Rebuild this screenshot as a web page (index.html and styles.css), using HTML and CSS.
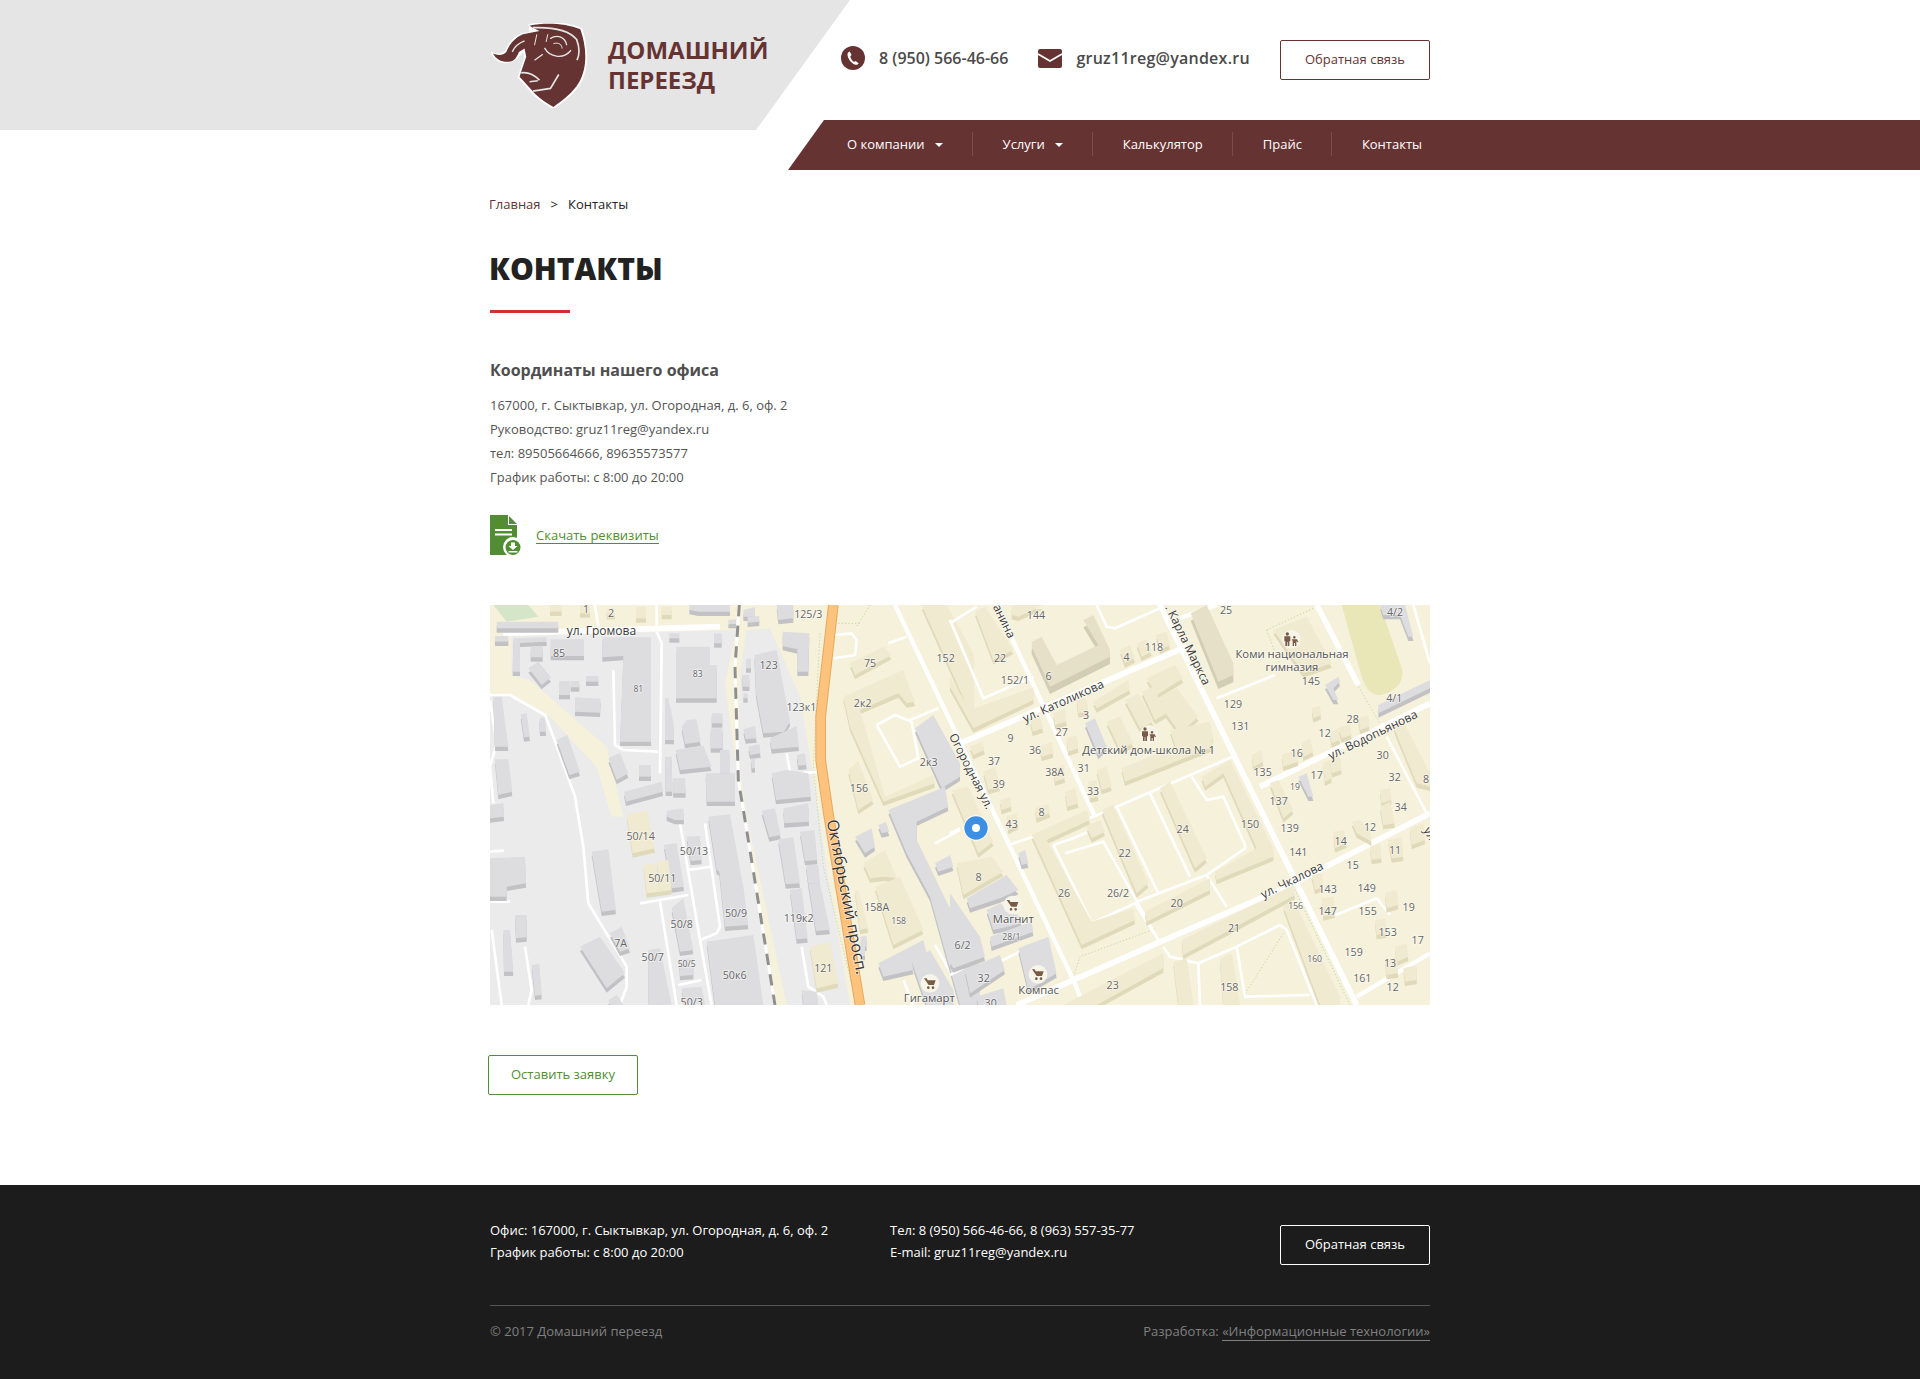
FILE: index.html
```html
<!DOCTYPE html>
<html lang="en">
<head>
    <meta charset="UTF-8">
    <link rel="stylesheet" href="styles.css">
    <title>Контакты</title>
</head>
<body>
<header class="header">
    <div class="headerGray"></div>
    <div class="wrap headerTop">
        <a class="logo" href="#">
            <svg class="logoIcon" viewBox="35 38 290 256" width="97" height="85">
                <path fill="#fff" d="M146 42C200 30 262 34 308 53C328 110 330 172 305 218C285 253 252 275 222 298C192 280 165 262 150 242L114 202L124 172L134 143L131 125L118 140C105 160 70 165 52 152C42 145 36 136 32 124C48 132 62 133 76 122C86 96 105 76 128 68L150 66Z"/>
                <path fill="#663333" d="M150 46C200 36 260 40 303 57C322 110 325 170 300 215C280 250 250 270 222 291C195 275 170 258 155 238L120 200L128 175L140 140L135 115L118 125C112 140 105 152 92 154C72 158 50 150 40 130C58 138 72 134 80 125C88 105 105 82 130 72L180 62L160 52Z"/>
                <g fill="none" stroke="#e5e5e5">
                    <path stroke-width="5" d="M160 52C220 50 270 60 292 88C302 115 300 135 293 150"/>
                    <path stroke-width="4" d="M195 113C210 140 250 150 275 120M212 85C235 70 258 82 262 105"/>
                    <path stroke-width="3" d="M222 100C240 95 248 105 248 115M172 72L165 105M205 72L200 95"/>
                    <path stroke-width="4" d="M98 125C105 110 118 98 135 92M165 150L190 132"/>
                    <path stroke-width="5" d="M125 188C145 185 165 195 180 210M150 215L175 212M160 243L213 235L238 193"/>
                </g>
            </svg>
            <span class="logoText">Домашний<br>переезд</span>
        </a>
        <div class="contactItem">
            <svg class="contactIcon" viewBox="0 0 24 24" width="24" height="24">
                <ellipse cx="12" cy="12" rx="12" ry="12" fill="#663333"/>
                <path fill="#fff" d="M8.800 5.500L10.600 8.900L9.300 10.400C9.700 12.300 11 14.400 12.900 15.900L14.600 14.900L17.600 17.200C17.100 18.400 15.800 19.100 14.500 18.800C10.400 17.700 7 13 6.500 9C6.300 7.200 7.300 5.900 8.800 5.500Z"/>
            </svg>
            <span>8 (950) 566-46-66</span>
        </div>
        <div class="contactItem contactMail">
            <svg class="contactIcon" viewBox="0 0 24 19" width="24" height="19">
                <rect width="24" height="19" rx="2" fill="#663333"/>
                <path fill="none" stroke="#fff" stroke-width="1.6" d="M0 5L12 12L24 5"/>
            </svg>
            <span>gruz11reg@yandex.ru</span>
        </div>
        <a class="btn btnBrown" href="#">Обратная связь</a>
    </div>
    <nav class="nav">
        <a class="navItem navArrow" href="#">О компании</a>
        <a class="navItem navArrow" href="#">Услуги</a>
        <a class="navItem" href="#">Калькулятор</a>
        <a class="navItem" href="#">Прайс</a>
        <a class="navItem navLast" href="#">Контакты</a>
    </nav>
</header>

<main class="wrap">
    <div class="breadcrumbs"><a href="#">Главная</a><span class="crumbSep">&gt;</span>Контакты</div>
    <h1 class="pageTitle">Контакты</h1>
    <div class="titleLine"></div>
    <h3 class="officeTitle">Координаты нашего офиса</h3>
    <div class="officeText">
        <p>167000, г. Сыктывкар, ул. Огородная, д. 6, оф. 2</p>
        <p>Руководство: gruz11reg@yandex.ru</p>
        <p>тел: 89505664666, 89635573577</p>
        <p>График работы: с 8:00 до 20:00</p>
    </div>
    <div class="docRow">
        <svg viewBox="0 0 32 40" width="32" height="40">
            <path fill="#528c34" d="M0 0H18V10H27V40H0Z"/>
            <path fill="#528c34" d="M19 1L27 9H19Z"/>
            <path fill="none" stroke="#fff" stroke-width="2" d="M5 15H22M5 19.500H22"/>
            <circle cx="23" cy="32" r="10" fill="#fff"/>
            <circle cx="23" cy="32.500" r="7.500" fill="#528c34"/>
            <path fill="#fff" d="M21 27.500H25V31H27.500L23 35L18.500 31H21ZM18.500 36H27.500V37.500H18.500Z"/>
        </svg>
        <a class="docLink" href="#">Скачать реквизиты</a>
    </div>

    <svg class="map" viewBox="0 0 940 400" width="940" height="400">
        <defs>
            <g id="westGray">
                <polygon points="50,65 235,65 235,85 50,85"/><polygon points="100,115 200,112 200,125 120,128 120,215 98,215"/><polygon points="45,108 85,108 85,125 45,125"/>
                <polygon points="212,118 312,118 312,168 212,168"/><polygon points="152,140 188,140 188,172 152,172"/><polygon points="145,205 175,185 213,232 185,255"/>
                <polygon points="237,243 270,243 270,285 237,285"/><polygon points="272,243 298,243 298,262 272,262"/><polygon points="318,228 355,228 355,245 318,245"/>
                <polygon points="285,292 362,296 360,338 285,335"/><polygon points="367,112 513,112 513,425 420,425 430,168 367,172"/><polygon points="590,140 690,140 690,195 710,195 710,295 588,295"/>
                <polygon points="568,100 598,100 598,115 568,115"/><polygon points="702,100 725,100 725,130 702,130"/><polygon points="555,295 565,295 580,365 582,420 555,420"/>
                <polygon points="605,380 620,360 650,358 662,425 615,432"/><polygon points="695,340 727,340 727,370 695,370"/><polygon points="692,385 728,385 728,445 692,445"/>
                <polygon points="587,450 670,437 695,500 600,510"/><polygon points="720,450 748,450 748,520 720,520"/><polygon points="677,520 765,520 765,605 680,605"/>
                <polygon points="555,470 575,470 577,575 557,575"/><polygon points="578,535 615,535 617,580 580,580"/><polygon points="477,495 513,495 513,530 477,530"/>
                <polygon points="385,475 420,458 445,520 410,540"/><polygon points="432,575 545,545 549,575 438,605"/><polygon points="560,632 610,625 612,660 585,660 560,650"/>
                <polygon points="230,420 262,405 300,515 268,525"/><polygon points="122,343 140,340 150,410 132,412"/><polygon points="178,355 195,352 198,395 180,395"/>
                <polygon points="40,290 65,290 85,440 45,440"/><polygon points="45,478 85,478 97,575 55,585"/><polygon points="30,615 70,610 72,650 30,655"/>
                <polygon points="30,775 135,770 138,850 80,860 80,890 30,890"/><polygon points="335,755 385,748 408,930 365,935"/><polygon points="620,710 660,708 665,780 632,783"/>
                <polygon points="552,735 590,730 612,860 575,865"/><polygon points="685,650 750,643 790,860 805,975 735,980 718,815 710,810"/><polygon points="575,925 610,895 640,1050 600,1055"/>
                <polygon points="680,1025 820,1005 850,1215 705,1215"/><polygon points="505,1050 540,1045 575,1215 505,1215"/><polygon points="597,1078 640,1075 640,1125 600,1128"/>
                <polygon points="605,1165 665,1160 675,1215 610,1215"/><polygon points="300,1040 360,1010 435,1120 380,1165"/><polygon points="390,1000 425,980 450,1045 420,1055"/>
                <polygon points="105,945 140,945 140,1012 108,1015"/><polygon points="70,990 90,990 100,1115 72,1115"/><polygon points="155,1095 178,1092 185,1185 165,1187"/>
                <polygon points="385,1200 410,1185 430,1215 390,1215"/><polygon points="790,30 825,22 825,50 790,50"/><polygon points="803,50 838,48 838,65 803,68"/>
                <polygon points="745,60 768,58 768,72 745,72"/><polygon points="628,15 750,15 750,35 655,35 628,30"/><polygon points="890,15 940,15 940,55 895,60"/>
                <polygon points="908,95 988,100 985,215 952,215 952,148 908,138"/><polygon points="823,165 890,150 930,365 912,395 850,400 828,280"/><polygon points="798,178 813,175 813,205 798,205"/>
                <polygon points="785,225 808,225 808,260 788,260"/><polygon points="790,280 803,280 803,295 790,295"/><polygon points="790,388 825,378 830,415 797,418"/>
                <polygon points="870,415 950,378 957,440 875,448"/><polygon points="805,440 838,432 842,460 810,465"/><polygon points="812,475 825,475 825,505 815,505"/>
                <polygon points="950,465 975,460 980,495 955,497"/><polygon points="875,520 920,510 985,520 993,590 888,600"/><polygon points="910,625 985,610 987,665 913,670"/>
                <polygon points="845,632 885,625 902,705 868,712"/><polygon points="895,718 940,712 960,850 917,853"/><polygon points="960,695 1003,690 1012,780 975,783"/>
                <polygon points="978,795 1015,795 1020,850 985,850"/><polygon points="985,850 1020,850 1050,990 1008,993"/><polygon points="930,870 965,865 983,1015 950,1018"/>
                <polygon points="965,1170 1010,1175 1015,1215 970,1215"/><polygon points="1305,385 1360,345 1440,490 1440,530 1385,565"/>
                <polygon points="1225,630 1395,560 1405,620 1310,665 1310,720 1400,905 1500,1100 1500,1215 1440,1215 1350,890 1280,760"/>
                <polygon points="1125,710 1175,685 1185,740 1155,760"/><polygon points="1195,675 1218,665 1228,695 1205,700"/><polygon points="1365,790 1410,765 1420,800 1375,815"/>
                <polygon points="1195,1090 1330,1020 1340,1060 1295,1085 1300,1110 1210,1130"/><polygon points="1295,1085 1350,1050 1420,1170 1420,1215 1340,1215"/>
                <polygon points="1142,1010 1160,1008 1160,1040 1142,1040"/><polygon points="1142,1040 1155,1038 1155,1068 1142,1068"/>
            </g>
            <g id="westBeige">
                <polygon points="440,645 500,630 525,745 458,760"/><polygon points="490,795 525,790 540,875 500,880"/><polygon points="530,785 565,780 575,870 540,875"/>
                <polygon points="990,1040 1050,1025 1075,1150 1010,1165"/><polygon points="1110,190 1210,140 1235,165 1125,225"/>
                <polygon points="1090,290 1270,210 1305,305 1280,310 1255,280 1140,330 1215,590 1360,525 1365,550 1210,605 1110,380"/>
                <polygon points="1105,510 1135,485 1180,600 1135,630"/><polygon points="1125,870 1135,870 1165,985 1140,990"/><polygon points="1185,860 1260,830 1330,990 1240,1035"/>
                <polygon points="1150,790 1215,750 1250,835 1215,830 1170,835"/><polygon points="1325,15 1400,15 1480,160 1480,360 1345,60"/>
                <polygon points="210,15 245,15 245,35 210,35"/><polygon points="300,15 330,15 330,40 300,40"/><polygon points="468,20 498,20 498,55 468,55"/>
                <polygon points="545,20 575,20 575,45 545,45"/><polygon points="380,25 405,25 405,45 380,45"/>
            </g>
            <g id="eastBeige">
                <polygon points="75,35 105,20 190,150 130,180"/><polygon points="185,15 280,15 205,50 185,45"/>
                <polygon points="510,150 540,135 555,175 525,190"/><polygon points="560,130 590,118 605,155 575,170"/><polygon points="618,105 650,95 660,135 630,150"/>
                <polygon points="0,230 60,330 250,262 250,300 70,385 0,260"/><polygon points="430,305 535,240 540,270 440,325"/>
                <polygon points="590,235 675,195 700,235 620,285"/><polygon points="525,300 565,280 610,365 570,385"/><polygon points="575,275 610,260 650,340 615,360"/>
                <polygon points="630,290 680,265 745,350 690,400 640,330"/><polygon points="470,365 510,350 550,430 510,450"/><polygon points="660,390 780,365 790,415 680,450"/>
                <polygon points="515,505 780,395 790,440 525,545"/><polygon points="60,440 95,425 105,450 70,465"/><polygon points="100,515 135,500 150,560 115,570"/>
                <polygon points="150,600 180,590 185,620 155,630"/><polygon points="170,650 200,640 205,675 175,690"/><polygon points="255,625 295,612 300,640 260,655"/>
                <polygon points="345,575 375,565 385,610 352,620"/><polygon points="240,360 270,350 280,385 248,395"/><polygon points="310,340 345,325 350,365 315,375"/>
                <polygon points="380,300 410,295 415,335 385,340"/><polygon points="350,415 380,405 385,445 355,455"/><polygon points="270,440 305,425 310,460 275,470"/>
                <polygon points="310,505 340,495 345,535 315,545"/><polygon points="440,510 470,500 485,560 455,570"/><polygon points="415,545 440,540 445,590 420,595"/>
                <polygon points="245,705 410,630 420,660 290,720 425,965 550,925 555,960 395,1035"/><polygon points="455,630 490,615 595,850 560,880"/>
                <polygon points="410,680 450,660 465,695 425,715"/><polygon points="630,565 660,545 770,775 735,805"/>
                <polygon points="755,530 840,480 970,745 970,770 800,840 795,815 920,745 820,520 765,560"/><polygon points="585,935 780,835 780,870 590,965"/>
                <polygon points="695,1020 1030,855 1035,885 700,1065"/><polygon points="340,1215 640,1060 640,1105 440,1215"/><polygon points="1000,920 1030,900 1170,1190 1170,1215 1110,1215"/>
                <polygon points="810,1075 845,1060 870,1215 820,1215"/><polygon points="670,1085 710,1075 730,1215 685,1215"/><polygon points="905,465 935,450 940,485 910,500"/>
                <polygon points="995,465 1040,450 1045,485 1000,500"/><polygon points="1055,430 1080,415 1090,455 1060,470"/><polygon points="1140,400 1165,385 1170,420 1145,430"/>
                <polygon points="1165,385 1200,370 1205,405 1175,415"/><polygon points="1225,355 1255,345 1258,380 1230,390"/><polygon points="1085,325 1110,318 1113,345 1090,355"/>
                <polygon points="960,550 985,540 1030,630 1000,655"/><polygon points="1120,490 1140,480 1145,535 1125,545"/><polygon points="1140,480 1170,470 1175,510 1145,520"/>
                <polygon points="1330,380 1360,365 1440,520 1440,560 1400,550"/><polygon points="1290,570 1320,565 1325,600 1295,610"/><polygon points="1290,620 1320,605 1335,670 1300,675"/>
                <polygon points="1150,695 1180,690 1190,730 1155,745"/><polygon points="1205,665 1230,660 1260,690 1265,725 1220,700"/><polygon points="1260,740 1290,730 1295,775 1265,780"/>
                <polygon points="1315,720 1355,710 1360,770 1325,775"/><polygon points="1380,685 1420,670 1425,720 1385,735"/><polygon points="1085,825 1115,820 1120,860 1095,870"/>
                <polygon points="1115,895 1150,890 1155,940 1120,950"/><polygon points="1305,880 1340,870 1345,915 1310,925"/><polygon points="1275,960 1305,955 1310,1000 1280,1005"/>
                <polygon points="1335,1040 1370,1030 1375,1070 1340,1085"/><polygon points="1305,1080 1340,1070 1345,1120 1310,1125"/><polygon points="1360,1105 1400,1095 1400,1140 1365,1145"/>
                <polygon points="5,570 55,560 130,725 85,760"/><polygon points="20,790 125,770 160,815 40,885"/><polygon points="970,90 1070,50 1145,190 1060,220"/>
            </g>
            <g id="eastTan">
                <polygon points="245,125 275,110 320,195 445,135 400,60 430,45 480,150 480,170 300,260 245,140"/><polygon points="722,40 770,15 850,190 850,225 805,245"/>
            </g>
            <g id="eastGray">
                <polygon points="405,370 435,355 470,440 445,465"/><polygon points="1045,530 1070,520 1090,590 1075,590"/><polygon points="205,760 225,750 235,790 215,795"/>
                <polygon points="1125,255 1165,230 1170,245 1150,265 1165,300 1150,300"/><polygon points="1285,315 1440,240 1440,265 1285,340"/><polygon points="1290,15 1365,15 1390,110 1375,110 1350,45 1300,45"/>
                <polygon points="50,895 170,825 205,870 150,895 60,925"/><polygon points="110,930 150,910 210,950 215,970 130,990"/><polygon points="120,1010 245,965 250,995 125,1040"/>
                <polygon points="205,1045 295,1010 320,1120 235,1170"/><polygon points="0,880 90,1010 105,1070 10,1105 0,1090"/><polygon points="45,1110 150,1065 165,1110 60,1180"/>
                <polygon points="80,1190 160,1165 170,1215 85,1215"/>
            </g>
            <g id="cartIcon">
                <circle r="28" fill="#f7f4ea"/>
                <path fill="#7a5c46" d="M-18 -15H-10L-7 -9H17L12 5H-4ZM-5 9A4 4 0 1 0 -5 17A4 4 0 1 0 -5 9ZM9 9A4 4 0 1 0 9 17A4 4 0 1 0 9 9Z"/>
            </g>
            <g id="peopleIcon">
                <circle r="28" fill="#f7f4ea"/>
                <path fill="#7a5c46" d="M-12 -21A5 5 0 1 1 -12 -11A5 5 0 1 1 -12 -21ZM-21 -9H-3V6H-6V20H-11V8H-13V20H-18V6H-21ZM9 -10A4 4 0 1 1 9 -2A4 4 0 1 1 9 -10ZM1 0H17L21 8L18 9L15 5V20H11V11H8V20H4V5Z"/>
            </g>
        </defs>

        <rect class="mapBg" width="940" height="400"/>

        <!-- west part, crop coordinates -->
        <g transform="translate(-10,-5) scale(0.33333)">
            <polygon class="mapGreen" points="40,15 145,15 175,50 80,65"/>
            <polygon class="mapZone" points="30,110 770,90 735,250 745,330 775,540 800,650 885,1215 30,1215"/>
            <polygon class="mapBg" points="30,110 95,110 95,225 150,240 380,440 430,650 395,650 350,500 210,350 100,285 30,285"/>
            <polygon class="mapZone" points="800,90 870,85 960,290 1000,530 1040,800 1110,1215 920,1215 800,650 772,450 782,200"/>
            <polyline class="mapPath" points="1020,100 1000,500 1030,800 1130,1215"/>
            <polyline class="mapPath" points="1075,70 1140,70"/>
            <polyline class="mapPath" points="1170,15 1130,80"/>

            <polyline class="road roadL" points="70,100 720,80"/>
            <polyline class="road roadS" points="345,15 355,80"/>
            <polyline class="road roadS" points="530,15 530,85"/>
            <polyline class="road roadS" points="530,95 545,130 540,520"/>
            <polyline class="road roadS" points="400,210 405,435 430,450 535,455"/>
            <polyline class="road roadS" points="30,285 90,285 195,345 220,410 285,590 310,740 325,910 440,1100 440,1160 420,1215"/>
            <polyline class="road roadS" points="30,300 50,430 30,500 40,610"/>
            <polyline class="road roadS" points="30,755 72,752"/>
            <polyline class="road roadS" points="30,905 90,905"/>
            <polyline class="road roadS" points="35,990 65,1215"/>
            <polyline class="road roadS" points="135,1040 155,1170 145,1215"/>
            <polyline class="road roadS" points="600,670 660,1020 695,1215"/>
            <polyline class="road roadS" points="675,670 720,980 710,1000 660,1020"/>
            <polyline class="road roadS" points="625,810 695,800"/>
            <polyline class="road roadS" points="480,910 625,885"/>
            <polyline class="road roadS" points="540,905 590,1215"/>
            <polyline class="road roadS" points="595,1155 665,1140"/>
            <polyline class="road roadS" points="965,1040 985,1160 1030,1190 1040,1215"/>
            <polyline class="road roadS" points="920,460 930,515"/>
            <polyline class="road roadS" points="960,520 1020,515"/>
            <polyline class="road roadS" points="1065,105 1115,100 1130,120 1125,165 1060,175"/>
            <polyline class="road roadS" points="1225,130 1280,110"/>
            <polyline class="road roadS" points="1190,375 1245,345 1295,365 1315,475 1260,500 1190,375"/>
            <polyline class="road roadS" points="1290,360 1375,325"/>
            <polyline class="road roadS" points="1365,730 1440,690"/>
            <polyline class="road roadS" points="1365,1035 1440,1165"/>
            <polyline class="road roadS" points="1270,1140 1300,1215"/>

            <use href="#westGray" class="graySide" y="13"/>
            <use href="#westGray" class="grayTop"/>
            <use href="#westBeige" class="beigeSide" y="13"/>
            <use href="#westBeige" class="beigeTop"/>

            <polyline class="rail railBase" points="778,15 765,200 775,540 800,690 885,1215"/>
            <polyline class="rail railDash" points="778,15 765,200 775,540 800,690 885,1215"/>
            <polyline class="orangeEdge" points="1060,15 1022,350 1022,480 1045,640 1140,1215"/>
            <polyline class="orangeRoad" points="1060,15 1022,350 1022,480 1045,640 1140,1215"/>

            <text class="street" x="260" y="104">ул. Громова</text>
            <text class="streetBig" transform="translate(1040,662) rotate(79)">Октябрьский просп.</text>
            <g class="num">
                <text x="318" y="40">1</text><text x="393" y="50">2</text><text x="985" y="55">125/3</text><text x="237" y="172">85</text><text x="1170" y="202">75</text>
                <text x="1397" y="187">152</text><text x="866" y="208">123</text><text x="964" y="334">123к1</text><text x="1148" y="322">2к2</text><text x="1346" y="499">2к3</text>
                <text x="1137" y="577">156</text><text x="482" y="721">50/14</text><text x="642" y="766">50/13</text><text x="547" y="847">50/11</text><text x="768" y="951">50/9</text>
                <text x="605" y="985">50/8</text><text x="956" y="967">119к2</text><text x="1190" y="934">158А</text><text x="422" y="1040">7А</text><text x="518" y="1084">50/7</text>
                <text x="764" y="1138">50к6</text><text x="1030" y="1115">121</text><text x="635" y="1217">50/3</text>
            </g>
            <g class="numSmall">
                <text x="653" y="230">83</text><text x="475" y="276">81</text><text x="620" y="1100">50/5</text><text x="1256" y="971">158</text>
            </g>
            <use href="#cartIcon" x="1350" y="1150"/>
            <text class="place" x="1348" y="1206">Гигамарт</text>
        </g>

        <!-- east part, crop coordinates -->
        <g transform="translate(460,-5) scale(0.33333)">
            <path class="mapField" d="M1175 15H1290L1355 205C1365 240 1340 275 1290 285C1260 285 1245 260 1235 230Z"/>
            <polyline class="mapPath" points="950,90 1090,25"/>
            <polyline class="mapPath" points="950,90 1000,220"/>
            <polyline class="mapPath" points="1225,260 1290,370"/>
            <polyline class="mapPath" points="370,1130 390,1070 620,985"/>
            <polyline class="mapPath" points="1000,1000 880,1190"/>
            <polyline class="mapPath" points="1030,860 1200,1215"/>

            <polyline class="road roadS" points="175,735 430,650 860,465"/>
            <polyline class="road roadS" points="800,295 975,225"/>
            <polyline class="road roadS" points="310,735 425,970 555,910 625,1020"/>
            <polyline class="road roadS" points="345,760 460,725 620,1010"/>
            <polyline class="road roadS" points="310,735 370,715 450,680"/>
            <polyline class="road roadS" points="500,620 625,880"/>
            <polyline class="road roadS" points="600,580 720,830"/>
            <polyline class="road roadS" points="560,905 770,825 885,745 885,735 820,590 770,600 725,530"/>
            <polyline class="road roadS" points="770,825 830,920"/>
            <polyline class="road roadS" points="640,1040 660,1070 745,1090 860,1040 990,975 1010,990 1100,1215"/>
            <polyline class="road roadS" points="860,1040 885,1190 1080,1185"/>
            <polyline class="road roadS" points="745,1090 750,1215"/>
            <polyline class="road roadS" points="1120,960 1280,895 1320,945"/>
            <polyline class="road roadS" points="0,60 100,295 250,230"/>
            <polyline class="road roadS" points="0,70 80,20"/>
            <polyline class="road roadS" points="440,15 470,80 495,85 640,20"/>
            <polyline class="road roadS" points="0,700 30,685"/>
            <polyline class="road roadS" points="0,1125 40,1105"/>
            <polyline class="road roadS" points="150,1085 290,1015"/>
            <polyline class="road roadS" points="1310,410 1430,640"/>
            <polyline class="road roadS" points="1390,15 1440,190"/>
            <polyline class="road roadM" points="1220,1190 1440,1060"/>
            <polyline class="road roadM" points="160,60 435,650"/>
            <polyline class="road roadM" points="-165,15 370,1140 400,1215"/>
            <polyline class="road roadM" points="690,55 800,15"/>
            <polyline class="road roadL" points="620,-5 1220,1215"/>
            <polyline class="road roadL" points="30,430 710,140"/>
            <polyline class="road roadL" points="200,1215 620,1030 990,870 1440,640"/>
            <polyline class="road roadL" points="930,560 1440,310"/>
            <polyline class="road roadL" points="1100,15 1225,255"/>

            <use href="#eastBeige" class="beigeSide" y="13"/>
            <use href="#eastBeige" class="beigeTop"/>
            <use href="#eastTan" class="tanSide" y="22"/>
            <use href="#eastTan" class="tanTop"/>
            <use href="#eastGray" class="graySide" y="13"/>
            <use href="#eastGray" class="grayTop"/>

            <text class="street" transform="translate(128,20) rotate(64)">анина</text>
            <text class="street" transform="translate(645,22) rotate(64)">. Карла Маркса</text>
            <text class="street" transform="translate(225,368) rotate(-24)">ул. Католикова</text>
            <text class="street" transform="translate(-4,408) rotate(63)">Огородная ул.</text>
            <text class="street" transform="translate(940,896) rotate(-26)">ул. Чкалова</text>
            <text class="street" transform="translate(1142,480) rotate(-26)">ул. Водопьянова</text>
            <text class="street" transform="translate(1420,690) rotate(60)">ул</text>
            <g class="num">
                <text x="258" y="58">144</text><text x="828" y="43">25</text><text x="1335" y="48">4/2</text><text x="612" y="152">118</text><text x="530" y="182">4</text>
                <text x="150" y="187">22</text><text x="296" y="241">6</text><text x="195" y="253">152/1</text><text x="1083" y="256">145</text><text x="1333" y="305">4/1</text>
                <text x="849" y="325">129</text><text x="871" y="391">131</text><text x="1208" y="370">28</text><text x="1124" y="410">12</text><text x="408" y="358">3</text>
                <text x="335" y="409">27</text><text x="182" y="427">9</text><text x="255" y="461">36</text><text x="132" y="496">37</text><text x="146" y="565">39</text>
                <text x="314" y="529">38А</text><text x="401" y="515">31</text><text x="429" y="584">33</text><text x="1040" y="472">16</text><text x="1100" y="537">17</text>
                <text x="1298" y="478">30</text><text x="1334" y="544">32</text><text x="1428" y="548">8</text><text x="938" y="529">135</text><text x="986" y="614">137</text>
                <text x="1352" y="632">34</text><text x="185" y="683">43</text><text x="275" y="649">8</text><text x="900" y="683">150</text><text x="698" y="698">24</text>
                <text x="1019" y="697">139</text><text x="1260" y="692">12</text><text x="1172" y="734">14</text><text x="524" y="770">22</text><text x="1045" y="767">141</text>
                <text x="1335" y="761">11</text><text x="1208" y="808">15</text><text x="86" y="844">8</text><text x="342" y="892">26</text><text x="504" y="890">26/2</text>
                <text x="680" y="920">20</text><text x="1133" y="880">143</text><text x="1250" y="877">149</text><text x="1133" y="946">147</text><text x="1253" y="944">155</text>
                <text x="1376" y="934">19</text><text x="1313" y="1009">153</text><text x="1403" y="1033">17</text><text x="38" y="1048">6/2</text><text x="852" y="995">21</text>
                <text x="1211" y="1069">159</text><text x="1320" y="1102">13</text><text x="1237" y="1147">161</text><text x="1328" y="1172">12</text><text x="101" y="1147">32</text>
                <text x="488" y="1166">23</text><text x="838" y="1172">158</text><text x="122" y="1222">30</text>
            </g>
            <g class="numSmall">
                <text x="1035" y="571">19</text><text x="1037" y="927">156</text><text x="184" y="1020">28/1</text><text x="1094" y="1087">160</text>
            </g>
            <use href="#peopleIcon" x="1024" y="118"/>
            <use href="#peopleIcon" x="597" y="403"/>
            <use href="#cartIcon" x="188" y="915"/>
            <use href="#cartIcon" x="264" y="1123"/>
            <text class="place" x="1026" y="174">Коми национальная</text>
            <text class="place" x="1026" y="213">гимназия</text>
            <text class="place" x="596" y="461">Детский дом-школа № 1</text>
            <text class="place" x="190" y="970">Магнит</text>
            <text class="place" x="266" y="1181">Компас</text>
            <circle class="mapPinEdge" cx="78" cy="684" r="38"/>
            <circle class="mapPin" cx="78" cy="684" r="35"/>
            <circle class="mapPinEdge" cx="78" cy="684" r="12"/>
        </g>
    </svg>

    <a class="btn btnGreen" href="#">Оставить заявку</a>
</main>

<footer class="footer">
    <div class="wrap">
        <div class="footerTop">
            <div class="footerCol footerAddress">
                <p>Офис: 167000, г. Сыктывкар, ул. Огородная, д. 6, оф. 2</p>
                <p>График работы: с 8:00 до 20:00</p>
            </div>
            <div class="footerCol">
                <p>Тел: 8 (950) 566-46-66, 8 (963) 557-35-77</p>
                <p>E-mail: gruz11reg@yandex.ru</p>
            </div>
            <a class="btn btnWhite" href="#">Обратная связь</a>
        </div>
        <div class="footerBottom">
            <span>© 2017 Домашний переезд</span>
            <span>Разработка: <a href="#">«Информационные технологии»</a></span>
        </div>
    </div>
</footer>
</body>
</html>
```

FILE: styles.css
```css
* {
    box-sizing: border-box;
}

body {
    margin: 0;
    font-family: "Open Sans", "Noto Sans", sans-serif;
    font-size: 13px;
    color: #555;
    background: #fff;
}

a {
    text-decoration: none;
}

p {
    margin: 0;
}

.wrap {
    width: 940px;
    margin: 0 auto;
}

/* header */
.header {
    position: relative;
    height: 170px;
}

.headerGray {
    position: absolute;
    top: 0;
    left: 0;
    width: 850px;
    height: 130px;
    background: #e5e5e5;
    clip-path: polygon(0 0, 100% 0, 756px 100%, 0 100%);
}

.headerTop {
    position: relative;
    display: flex;
    align-items: center;
    height: 120px;
}

.logo {
    display: flex;
    align-items: center;
    align-self: flex-start;
    width: 351px;
    padding: 23px 0 0 1px;
}

.logoIcon {
    display: block;
}

.logoText {
    margin: 0 0 2px 20px;
    font-size: 24px;
    font-weight: 700;
    line-height: 30px;
    color: #663333;
    text-transform: uppercase;
}

.contactItem {
    display: flex;
    align-items: center;
    margin-bottom: 4px;
    font-size: 16px;
    font-weight: 600;
    color: #4a4a4a;
}

.contactIcon {
    margin-right: 14px;
}

.contactMail {
    margin-left: 30px;
    letter-spacing: 0.25px;
}

.btn {
    display: block;
    width: 150px;
    height: 40px;
    border: 1px solid;
    border-radius: 2px;
    font-size: 13px;
    line-height: 37px;
    text-align: center;
}

.btnBrown {
    margin-left: auto;
    border-color: #663333;
    color: #663333;
}

.btnGreen {
    margin: 50px 0 90px -2px;
    border-color: #528c34;
    color: #528c34;
}

.btnWhite {
    margin: 6px 0 0 auto;
    border-color: #fff;
    color: #fff;
}

.nav {
    display: flex;
    align-items: center;
    height: 50px;
    margin-left: 788px;
    padding: 0 0 2px 29px;
    background: #663333;
    clip-path: polygon(36px 0, 100% 0, 100% 100%, 0 100%);
}

.navItem {
    padding: 0 29px 0 30px;
    border-right: 1px solid #7d4d4d;
    line-height: 24px;
    color: #fff;
}

.navLast {
    border-right: none;
}

.navArrow::after {
    content: "";
    display: inline-block;
    margin-left: 10px;
    vertical-align: 2px;
    border-top: 4px solid #fff;
    border-left: 4px solid transparent;
    border-right: 4px solid transparent;
}

/* content */
.breadcrumbs {
    margin-left: -1px;
    padding-top: 24px;
    line-height: 20px;
    color: #222;
}

.breadcrumbs a {
    color: #663333;
}

.crumbSep {
    margin: 0 10px;
}

.pageTitle {
    margin: 35px 0 0 -1px;
    font-size: 30px;
    font-weight: 800;
    line-height: 40px;
    color: #222;
    text-transform: uppercase;
}

.titleLine {
    width: 80px;
    height: 3px;
    margin-top: 21px;
    background: #d32f2f;
}

.officeTitle {
    margin: 45px 0 0;
    font-size: 16px;
    font-weight: 700;
    line-height: 24px;
    color: #4f4f4f;
}

.officeText {
    margin-top: 11px;
    line-height: 24px;
}

.docRow {
    display: flex;
    align-items: center;
    margin-top: 26px;
}

.docLink {
    margin: 2px 0 0 14px;
    border-bottom: 1px solid #528c34;
    line-height: 15px;
    color: #528c34;
}

/* map */
.map {
    display: block;
    margin-top: 50px;
}

.mapBg {
    fill: #f6f1da;
}

.mapZone {
    fill: #ebebeb;
}

.mapGreen {
    fill: #d5e6c8;
}

.mapField {
    fill: #e9e6b8;
}

.mapPath {
    fill: none;
    stroke: #c3d9a8;
    stroke-width: 3;
    stroke-dasharray: 4 6;
}

.road {
    fill: none;
    stroke: #fff;
    stroke-linejoin: round;
}

.roadS {
    stroke-width: 8;
}

.roadM {
    stroke-width: 13;
}

.roadL {
    stroke-width: 17;
}

.grayTop {
    fill: #dddde0;
}

.graySide {
    fill: #c2c2c5;
}

.beigeTop {
    fill: #f0ead0;
}

.beigeSide {
    fill: #e0d9ba;
}

.tanTop {
    fill: #e6e0c8;
}

.tanSide {
    fill: #d2cdb5;
}

.rail {
    fill: none;
    stroke-width: 9;
}

.railBase {
    stroke: #fff;
}

.railDash {
    stroke: #8f8f8f;
    stroke-dasharray: 34 28;
}

.orangeEdge {
    fill: none;
    stroke: #e8a860;
    stroke-width: 32;
}

.orangeRoad {
    fill: none;
    stroke: #fdc27c;
    stroke-width: 26;
}

.map text {
    paint-order: stroke;
    stroke: rgba(255, 255, 255, 0.55);
    stroke-width: 5px;
}

.num text {
    font-size: 32px;
    fill: #666;
    text-anchor: middle;
}

.numSmall text {
    font-size: 26px;
    fill: #666;
    text-anchor: middle;
}

.street {
    font-size: 36px;
    fill: #3a3a3a;
}

.streetBig {
    font-size: 48px;
    fill: #333;
}

.place {
    font-size: 34px;
    fill: #555;
    text-anchor: middle;
}

.mapPin {
    fill: #3d8fe3;
}

.mapPinEdge {
    fill: #fff;
}

/* footer */
.footer {
    height: 194px;
    background: #1c1c1c;
    color: #fff;
}

.footerTop {
    display: flex;
    align-items: flex-start;
    height: 121px;
    padding-top: 34px;
    border-bottom: 1px solid #555;
    line-height: 22px;
}

.footerAddress {
    width: 400px;
}

.footerBottom {
    display: flex;
    justify-content: space-between;
    padding-top: 14px;
    line-height: 22px;
    color: #808080;
}

.footerBottom a {
    border-bottom: 1px solid #808080;
    color: #808080;
}
```
